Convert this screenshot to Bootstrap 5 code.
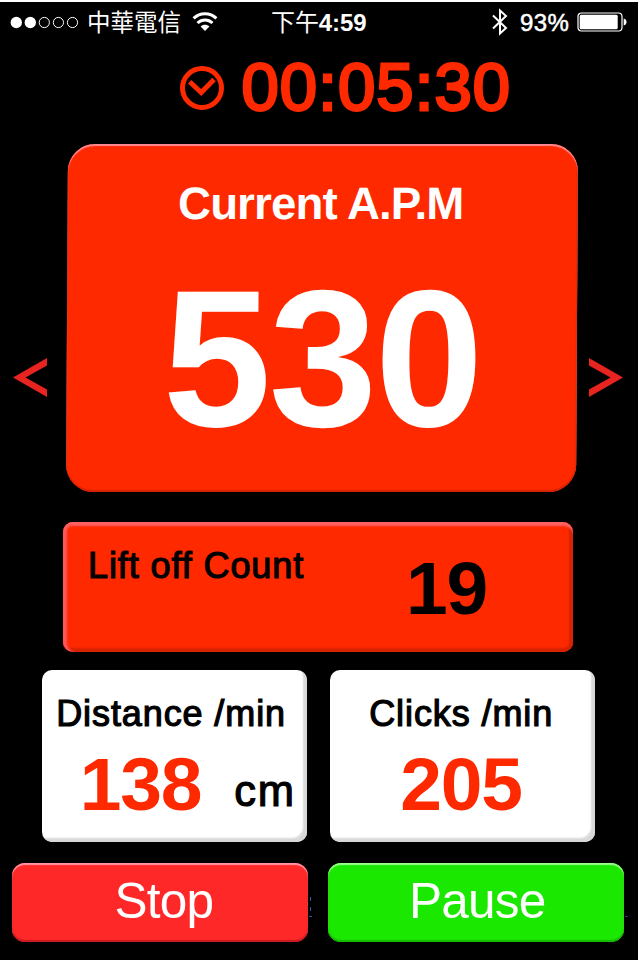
<!DOCTYPE html>
<html lang="zh-Hant">
<head>
<meta charset="utf-8">
<meta name="viewport" content="width=device-width, initial-scale=1">
<title>A.P.M</title>
<link href="https://cdn.jsdelivr.net/npm/bootstrap@5.3.0/dist/css/bootstrap.min.css" rel="stylesheet">
<style>
:root{--hot:#ff2900}
body{background:#fff;width:640px;height:960px;overflow:hidden;font-family:"Liberation Sans","Noto Sans CJK TC",sans-serif}
.screen{width:638px;height:958px;margin-top:2px;background:#000}
.med{-webkit-text-stroke:1.2px currentColor}
.hot{color:var(--hot)}
.tx{white-space:nowrap;display:block}
.statusbar{height:42px;color:#fff;padding-left:10px}
.statusbar svg,.timer svg{display:block;flex:none}
.carrier{font-size:23.5px;line-height:42px;margin-left:8px;width:95px}
.clock{font-size:24px;line-height:42px;margin-left:53px;width:98px;letter-spacing:-.1px}
.pct{font-size:24px;line-height:42px;-webkit-text-stroke:.5px #fff;margin-left:11px;width:50px;letter-spacing:.4px}
.timer{height:100px;padding-left:180px}
.timer .tx{font-size:67px;line-height:86px;letter-spacing:1.1px;-webkit-text-stroke:2.8px var(--hot);margin-left:16.5px}
.stage{height:348px;padding:0 15px 0 13px}
.apm{width:509.5px;height:348px;margin-left:20px;border:0;border-radius:27px;background:var(--hot);color:#fff;transform:skewX(-.33deg);box-shadow:inset 0 2px 1px #ff8a94,inset 0 -2px 1px #d42300,inset -1px 0 1px #d42300}
.apm-title{font-size:45.5px;line-height:60px;letter-spacing:-.8px;padding:30px 0 0 110.5px}
.apm-num{font-size:195px;line-height:200px;letter-spacing:-2.4px;padding:24px 0 0 96px}
.lift{width:510px;height:130px;margin:30px 0 0 63px;border:0;border-radius:10px;background:var(--hot);color:#000;box-shadow:inset 0 5px 2px -1px #ff6062,inset 5px 0 2px -1px #ff5558,inset -5px 0 2px -1px #d62200,inset 0 -5px 2px -1px #d62200}
.label{font-size:36px;line-height:44px;letter-spacing:.9px}
.lift .label{padding:22px 0 0 25px;width:343px}
.value{font-size:75px;line-height:76px;letter-spacing:-1.2px}
.lift .value{padding-top:28px}
.pair{gap:23px;margin:18px 0 0 41.7px}
.tile{width:265px;height:171.5px;border:0;border-radius:10px;background:#fff;color:#000;box-shadow:inset -5px -5px 2px -1px #d8d8d8}
.tile .label{padding-top:22px}
.tile .value{line-height:76px;padding-top:10px}
.unit{font-size:43.5px;line-height:44px;padding-top:33px;letter-spacing:1.8px}
.actions{gap:20px;margin:21px 0 0 12px}
.actions .btn{width:296px;height:79px;border:0;border-radius:13px;padding:0;color:#fff;font-size:49.5px;line-height:76px;letter-spacing:-.8px;text-align:left;vertical-align:top}
.actions .tx{height:79px}
.stop{background:#ff2828!important;box-shadow:inset 0 2px 1px #ff95a5,inset 0 -2px 1px #c81c20,inset 0 0 2px #d02020}
.pause{background:#1be800!important;box-shadow:inset 0 2px 1px #9cff8c,inset 0 -2px 1px #14b800,inset 0 0 2px #18bc00}
.specks{position:absolute;left:100%;top:33px}
</style>
<script src="https://cdn.jsdelivr.net/npm/bootstrap@5.3.0/dist/js/bootstrap.bundle.min.js"></script>
</head>
<body>
<main class="screen d-flex flex-column">
  <header class="statusbar d-flex align-items-center">
    <svg width="69" height="14" viewBox="0 0 69 14"><g fill="#fff"><circle cx="6.3" cy="6.5" r="5.7"/><circle cx="20.3" cy="6.5" r="5.7"/></g><g fill="none" stroke="#fff"><circle cx="34.3" cy="6.5" r="5.1"/><circle cx="48.4" cy="6.5" r="5.1"/><circle cx="62.5" cy="6.5" r="5.1"/></g></svg>
    <span class="tx carrier">中華電信</span>
    <svg width="26" height="20" viewBox="0 0 26 20" style="margin:-2px 0 0 10px"><g fill="none" stroke="#fff" stroke-width="3"><path d="M1.6 6.4C8 .2 18 .2 24.4 6.4"/><path d="M5.5 11C9.8 6.9 16.2 6.9 20.5 11"/></g><path d="M13 19 8.6 14.5C11 12.3 15 12.3 17.4 14.5Z" fill="#fff"/></svg>
    <span class="tx clock"><span>下午</span><b>4:59</b></span>
    <svg width="18" height="28" viewBox="0 0 18 28" style="margin:-2px 0 0 122px"><path d="M2 7.5 15 20 9 25.5V2.5L15 8 2 20.5" fill="none" stroke="#fff" stroke-width="2"/></svg>
    <span class="tx pct">93%</span>
    <svg width="50" height="20" viewBox="0 0 50 20" style="margin:-2px 0 0 7px"><rect x="1" y="1" width="44" height="18" rx="3.5" fill="none" stroke="#fff" stroke-width="1.2"/><rect x="2.7" y="2.7" width="38" height="14.6" rx="1.5" fill="#fff"/><path d="M46.7 6.5Q49.5 7.2 49.5 10T46.7 13.5Z" fill="#fff"/></svg>
  </header>
  <section class="timer d-flex align-items-start hot">
    <svg width="45" height="45" viewBox="0 0 45 45" style="margin-top:21.7px"><g fill="none" stroke="#ff2900"><circle cx="22" cy="22" r="19.5" stroke-width="5"/><path d="M9.7 15.7 21.2 26.5 34 13.5" stroke-width="5"/></g></svg>
    <span class="tx">00:05:30</span>
  </section>
  <section class="stage d-flex align-items-center">
    <svg width="34" height="40" viewBox="0 0 34 40" style="margin-top:119px"><path d="M34 0 0 19.5 34 39V31.5L12.5 19.5 34 7.5Z" fill="#e82420"/></svg>
    <article class="apm flex-shrink-0">
      <span class="tx apm-title fw-bold">Current A.P.M</span>
      <span class="tx apm-num fw-bold">530</span>
    </article>
    <svg class="ms-auto" width="34" height="40" viewBox="0 0 34 40" style="margin-top:119px"><path d="M0 0 34 19.5 0 39V31.5L21.5 19.5 0 7.5Z" fill="#e82420"/></svg>
  </section>
  <section class="lift d-flex align-items-start">
    <span class="tx label med">Lift off Count</span>
    <span class="tx value fw-bold">19</span>
  </section>
  <section class="pair d-flex">
    <article class="tile">
      <span class="tx label med" style="padding-left:14.5px">Distance /min</span>
      <div class="d-flex">
        <span class="tx value fw-bold hot" style="padding-left:38px;width:192.5px">138</span>
        <span class="tx unit med">cm</span>
      </div>
    </article>
    <article class="tile">
      <span class="tx label med" style="padding-left:39.5px">Clicks /min</span>
      <span class="tx value fw-bold hot" style="padding-left:70.5px">205</span>
    </article>
  </section>
  <footer class="actions d-flex">
    <button class="btn stop position-relative" type="button"><span class="tx" style="padding-left:102.5px">Stop</span><svg class="specks" width="4" height="24" viewBox="0 0 4 24"><path d="M2.5 1v4M2.5 11v4M1 20.5h3" stroke="#33589c" fill="none"/></svg></button>
    <button class="btn pause position-relative" type="button"><span class="tx" style="padding-left:81px">Pause</span><svg class="specks" width="4" height="24" viewBox="0 0 4 24"><path d="M1.5 20.5h2" stroke="#33589c" fill="none"/></svg></button>
  </footer>
</main>
</body>
</html>
